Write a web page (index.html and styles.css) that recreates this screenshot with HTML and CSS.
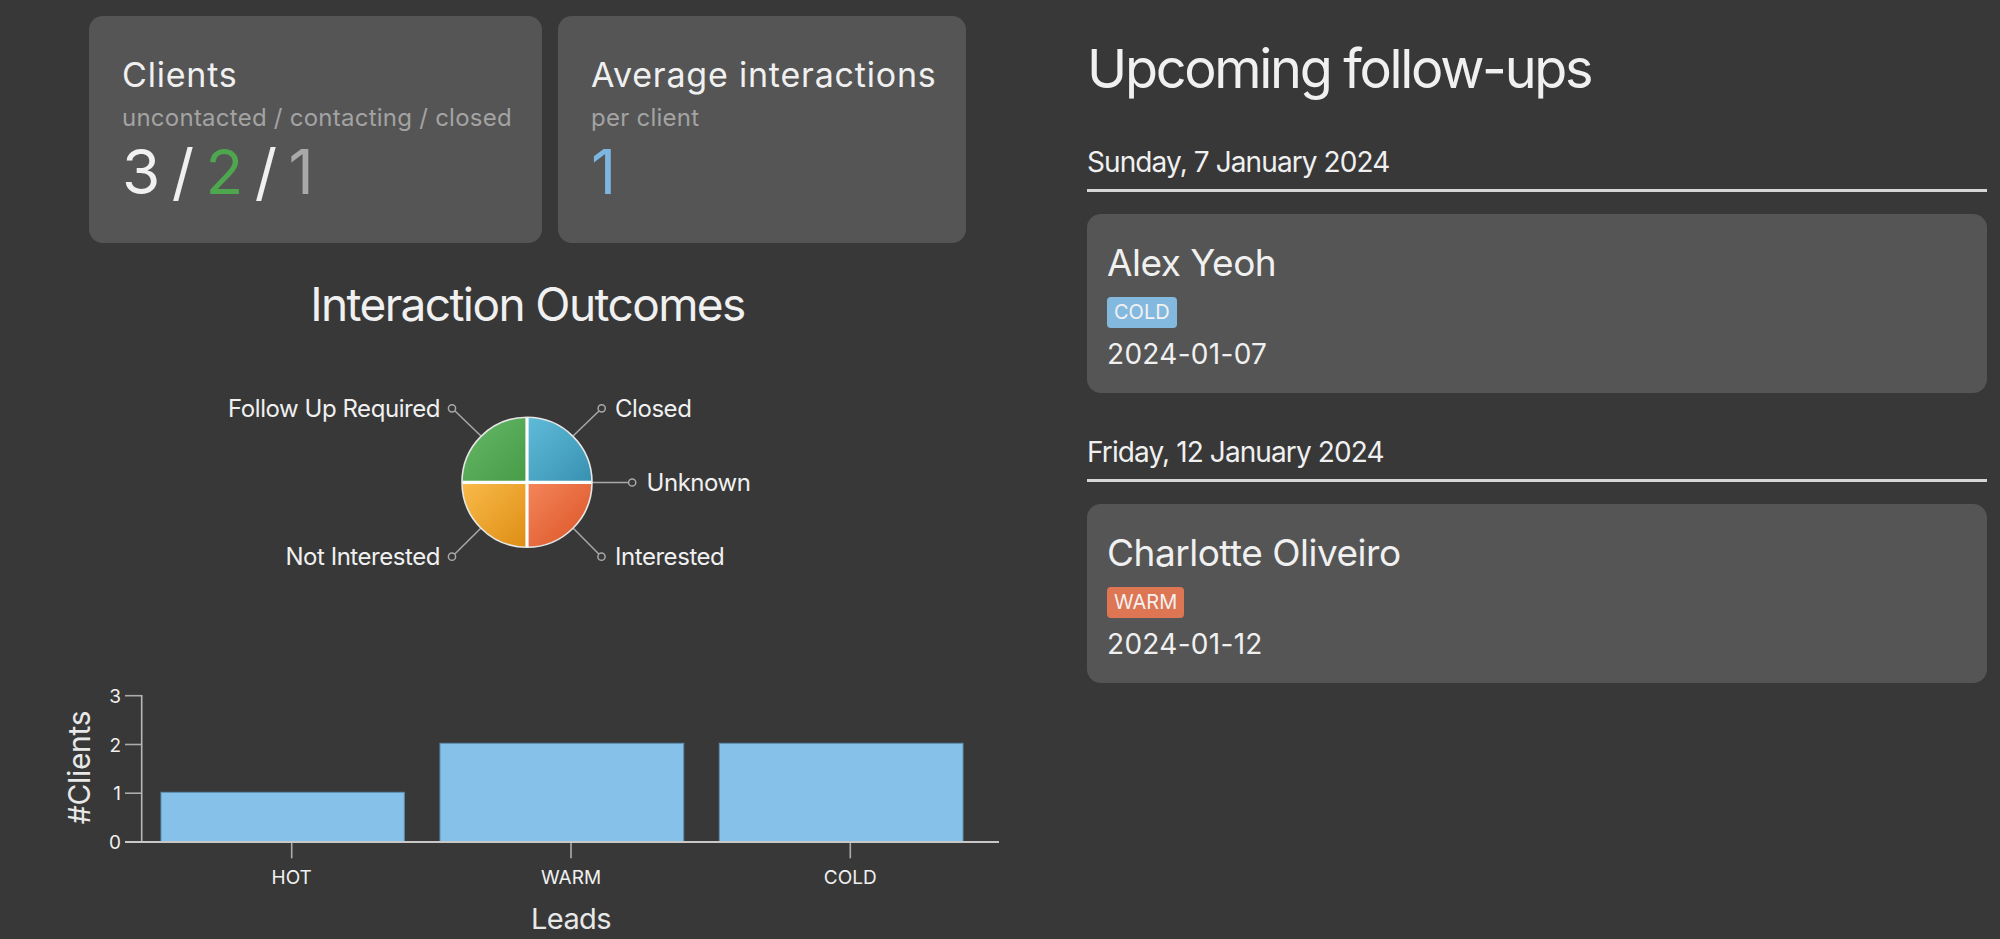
FILE: index.html
```html
<!DOCTYPE html>
<html lang="en">
<head>
<meta charset="utf-8">
<title>Dashboard</title>
<link rel="stylesheet" href="styles.css">
</head>
<body>
<div class="page">
  <div class="left">
    <div class="stats">
      <div class="stat-card clients">
        <div class="stat-title">Clients</div>
        <div class="stat-sub">uncontacted / contacting / closed</div>
        <div class="stat-value"><span class="v-white">3</span> / <span class="v-green">2</span> / <span class="v-gray">1</span></div>
      </div>
      <div class="stat-card avg">
        <div class="stat-title">Average interactions</div>
        <div class="stat-sub">per client</div>
        <div class="stat-value"><span class="v-blue">1</span></div>
      </div>
    </div>

    <h2 class="chart-title">Interaction Outcomes</h2>
    <svg class="pie" width="877" height="268" viewBox="0 0 877 268">
      <defs>
        <linearGradient id="gBlue" x1="0" y1="0" x2="1" y2="1">
          <stop offset="0" stop-color="#5fbcd9"/>
          <stop offset="1" stop-color="#3890b0"/>
        </linearGradient>
        <linearGradient id="gRed" x1="0" y1="0" x2="1" y2="1">
          <stop offset="0" stop-color="#f4865a"/>
          <stop offset="1" stop-color="#da5225"/>
        </linearGradient>
        <linearGradient id="gOrange" x1="0" y1="0" x2="1" y2="1">
          <stop offset="0" stop-color="#f9bb4a"/>
          <stop offset="1" stop-color="#de8d14"/>
        </linearGradient>
        <linearGradient id="gGreen" x1="0" y1="0" x2="1" y2="1">
          <stop offset="0" stop-color="#66b866"/>
          <stop offset="1" stop-color="#479c48"/>
        </linearGradient>
      </defs>
      <g class="leader">
        <line x1="366" y1="79" x2="392" y2="104"/>
        <circle cx="363" cy="76.3" r="3.6"/>
        <line x1="510" y1="79" x2="484" y2="104"/>
        <circle cx="512.7" cy="76.3" r="3.6"/>
        <line x1="503" y1="150.5" x2="539.5" y2="150.5"/>
        <circle cx="543.2" cy="150.5" r="3.6"/>
        <line x1="509.8" y1="222" x2="484" y2="196"/>
        <circle cx="512.5" cy="224.7" r="3.6"/>
        <line x1="365.8" y1="222" x2="392" y2="196"/>
        <circle cx="363" cy="224.7" r="3.6"/>
      </g>
      <path d="M438 150.3 L438 85.3 A65 65 0 0 1 503 150.3 Z" fill="url(#gBlue)"/>
      <path d="M438 150.3 L503 150.3 A65 65 0 0 1 438 215.3 Z" fill="url(#gRed)"/>
      <path d="M438 150.3 L438 215.3 A65 65 0 0 1 373 150.3 Z" fill="url(#gOrange)"/>
      <path d="M438 150.3 L373 150.3 A65 65 0 0 1 438 85.3 Z" fill="url(#gGreen)"/>
      <g class="sep">
        <line x1="438" y1="85.3" x2="438" y2="215.3"/>
        <line x1="373" y1="150.3" x2="503" y2="150.3"/>
      </g>
      <circle class="pie-rim" cx="438" cy="150.3" r="65"/>
      <g class="pie-label">
        <text x="351" y="84.7" text-anchor="end">Follow Up Required</text>
        <text x="526" y="84.7">Closed</text>
        <text x="557.5" y="159.2">Unknown</text>
        <text x="526" y="233.4">Interested</text>
        <text x="351" y="233.4" text-anchor="end">Not Interested</text>
      </g>
    </svg>

    <svg class="bars" width="877" height="339" viewBox="0 0 877 339">
      <g class="bar-rects">
        <rect x="72" y="192.3" width="243.3" height="49.7"/>
        <rect x="351" y="143.3" width="243.7" height="98.7"/>
        <rect x="630.3" y="143.3" width="243.7" height="98.7"/>
      </g>
      <g class="ticks">
        <line x1="36" y1="95.7" x2="52.7" y2="95.7"/>
        <line x1="36" y1="144.5" x2="52.7" y2="144.5"/>
        <line x1="36" y1="193.2" x2="52.7" y2="193.2"/>
        <line x1="202.7" y1="242" x2="202.7" y2="258.3"/>
        <line x1="482" y1="242" x2="482" y2="258.3"/>
        <line x1="761.3" y1="242" x2="761.3" y2="258.3"/>
      </g>
      <line class="axis-y" x1="52.7" y1="95" x2="52.7" y2="242"/>
      <line class="axis-x" x1="36" y1="242" x2="910" y2="242"/>
      <g class="tick-label">
        <text x="32" y="102.7" text-anchor="end">3</text>
        <text x="32" y="151.5" text-anchor="end">2</text>
        <text x="32" y="200.2" text-anchor="end">1</text>
        <text x="32" y="249" text-anchor="end">0</text>
        <text x="202.7" y="284" text-anchor="middle">HOT</text>
        <text x="482" y="284" text-anchor="middle">WARM</text>
        <text x="761.3" y="284" text-anchor="middle">COLD</text>
      </g>
      <text class="axis-title y-title" transform="translate(1 167.5) rotate(-90)" text-anchor="middle">#Clients</text>
      <text class="axis-title" x="482" y="329.3" text-anchor="middle">Leads</text>
    </svg>
  </div>

  <div class="right">
    <h1 class="fu-title">Upcoming follow-ups</h1>

    <div class="fu-group">
      <div class="fu-date">Sunday, 7 January 2024</div>
      <div class="fu-card">
        <div class="fu-name">Alex Yeoh</div>
        <span class="badge cold">COLD</span>
        <div class="fu-day">2024-01-07</div>
      </div>
    </div>

    <div class="fu-group">
      <div class="fu-date">Friday, 12 January 2024</div>
      <div class="fu-card">
        <div class="fu-name">Charlotte Oliveiro</div>
        <span class="badge warm">WARM</span>
        <div class="fu-day">2024-01-12</div>
      </div>
    </div>
  </div>
</div>
</body>
</html>
```

FILE: styles.css
```css
* { box-sizing: border-box; }

html, body {
  margin: 0;
  padding: 0;
  background: #383838;
  color: #f0f0f0;
  font-family: Inter, "Noto Sans", "Liberation Sans", sans-serif;
}

body { width: 2000px; height: 939px; overflow: hidden; }

.page {
  display: flex;
  padding: 16px 13px 0 89px;
}

.left {
  width: 877px;
  flex: none;
  display: flex;
  flex-direction: column;
}

.stats {
  display: flex;
  gap: 16px;
}

.stat-card {
  background: #555555;
  border-radius: 14px;
  height: 227px;
  padding: 38px 20px 0 33px;
  white-space: nowrap;
}

.stat-card.clients { width: 453px; }
.stat-card.avg { width: 408px; }

.stat-title {
  font-size: 34px;
  line-height: 41px;
  color: #f0f0f0;
  letter-spacing: 0.8px;
}

.stat-sub {
  margin-top: 8px;
  font-size: 24px;
  line-height: 30px;
  color: #a3a3a3;
  letter-spacing: 0.25px;
}

.stat-value {
  margin-top: 4px;
  font-size: 62px;
  line-height: 70px;
  color: #f0f0f0;
  letter-spacing: -3px;
}

.v-white { color: #f0f0f0; }
.v-green { color: #4ea64f; }
.v-gray { color: #a9a9a9; }
.v-blue { color: #7db6e0; }

.chart-title {
  margin: 34px 0 0 0;
  font-size: 46px;
  line-height: 55px;
  font-weight: 400;
  text-align: center;
  color: #f0f0f0;
  letter-spacing: -1.6px;
}

.pie, .bars { display: block; overflow: visible; }

.leader line { stroke: #a8a8a8; stroke-width: 1.5; }
.leader circle { stroke: #a8a8a8; stroke-width: 1.5; fill: none; }
.sep line { stroke: #ffffff; stroke-width: 3.2; }
.pie-rim { fill: none; stroke: #e6e6e6; stroke-width: 1.6; }

.pie-label text {
  font-family: Inter, "Noto Sans", sans-serif;
  font-size: 24px;
  fill: #f0f0f0;
  letter-spacing: -0.45px;
}

.bar-rects rect {
  fill: #85c1e9;
  stroke: #5f8fb3;
  stroke-width: 1;
}

.ticks line { stroke: #acacac; stroke-width: 1.6; }
.axis-y { stroke: #b8b8b8; stroke-width: 1.6; }
.axis-x { stroke: #c8c8c8; stroke-width: 2.2; }

.tick-label text {
  font-family: Inter, "Noto Sans", sans-serif;
  font-size: 19px;
  fill: #f0f0f0;
}

.axis-title {
  font-family: Inter, "Noto Sans", sans-serif;
  font-size: 29px;
  fill: #e8e8e8;
  letter-spacing: -0.6px;
}

.y-title {
  font-size: 30px;
  letter-spacing: -0.3px;
}

.right {
  width: 900px;
  flex: none;
  margin-left: 121px;
}

.fu-title {
  margin: 21px 0 0 0;
  font-size: 54px;
  line-height: 64px;
  font-weight: 400;
  color: #f0f0f0;
  letter-spacing: -2.3px;
}

.fu-group { margin-top: 42px; }
.fu-group:first-of-type { margin-top: 44px; }

.fu-date {
  font-size: 28px;
  line-height: 34px;
  padding-bottom: 10px;
  border-bottom: 3px solid #d6d6d6;
  color: #f0f0f0;
  letter-spacing: -0.9px;
}

.fu-card {
  margin-top: 22px;
  background: #555555;
  border-radius: 14px;
  height: 179px;
  padding: 27px 20px 0 20px;
}

.fu-name {
  font-size: 37px;
  line-height: 44px;
  color: #f0f0f0;
  letter-spacing: -0.5px;
}

.badge {
  display: inline-block;
  margin-top: 12px;
  height: 31px;
  line-height: 31px;
  padding: 0 7px;
  border-radius: 4px;
  font-size: 20px;
  color: #f2f2f2;
}

.badge.cold { background: #83b9df; }
.badge.warm { background: #de7553; }

.fu-day {
  margin-top: 9px;
  font-size: 28px;
  line-height: 34px;
  color: #f0f0f0;
  letter-spacing: 0.3px;
}
```
